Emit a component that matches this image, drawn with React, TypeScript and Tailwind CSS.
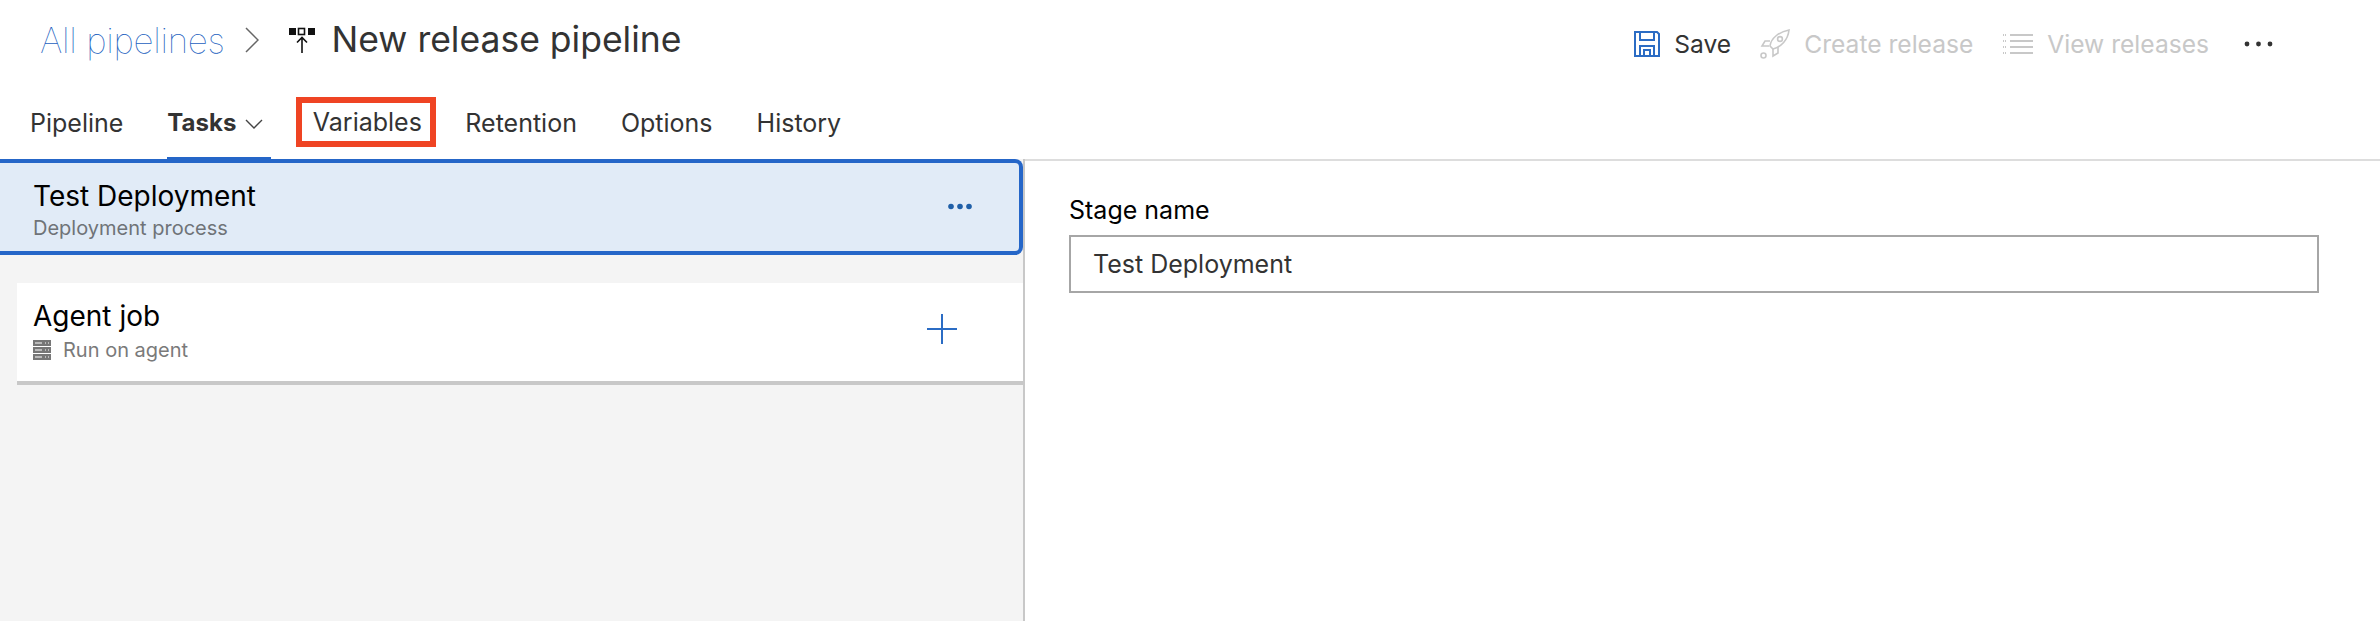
import React from "react";

function Tab({ label, className = "" }: { label: string; className?: string }) {
  return <span className={`text-[25px] leading-[30px] text-[#333333] ${className}`}>{label}</span>;
}

function PipelineIcon() {
  return (
    <svg width="28" height="26" viewBox="0 0 28 26" className="mr-[16px] shrink-0">
      <rect x="1" y="1" width="7" height="7" fill="#111" />
      <rect x="10.5" y="1.5" width="6" height="6" fill="#fff" stroke="#111" strokeWidth="1.6" />
      <rect x="20" y="1" width="7" height="7" fill="#111" />
      <path d="M14 26V11M9 15.5L14 10.5L19 15.5" fill="none" stroke="#111" strokeWidth="1.6" />
    </svg>
  );
}

function SaveIcon() {
  return (
    <svg width="26" height="26" viewBox="0 0 26 26" fill="none" stroke="#2b6cc4" strokeWidth="2">
      <path d="M1 1H23L25 3V25H1Z" />
      <path d="M6 1V9H20V1" />
      <path d="M6 25V15H20V25" />
      <path d="M10 25V19H16V25" />
    </svg>
  );
}

function RocketIcon() {
  return (
    <svg width="30" height="30" viewBox="0 0 30 30" fill="none" stroke="#c8c8c8" strokeWidth="1.6">
      <path d="M10 17C11 9 19 3 29 1C28 11 21 18 13 20Z" />
      <circle cx="20" cy="10" r="2.4" />
      <path d="M10 12H5L2 17L9 17" />
      <path d="M18 18V24L13 27L13 20" />
      <circle cx="3.5" cy="26.5" r="2.5" />
    </svg>
  );
}

function ListIcon() {
  return (
    <svg width="30" height="24" viewBox="0 0 30 24" stroke="#c8c8c8" strokeWidth="2">
      <path d="M7 3H30M7 9H30M7 15H30M7 21H30" />
      <path d="M0 3H3M0 9H3M0 15H3M0 21H3" strokeDasharray="1 1" />
    </svg>
  );
}

function ServerIcon() {
  return (
    <svg width="18" height="20" viewBox="0 0 18 20" className="mr-[12px] shrink-0">
      <rect y="0" width="18" height="6" fill="#777" />
      <rect y="7" width="18" height="6" fill="#777" />
      <rect y="14" width="18" height="6" fill="#777" />
      <path d="M2 3H9M12 3H13M15 3H16M2 10H9M12 10H13M15 10H16M2 17H9M12 17H13M15 17H16" stroke="#fff" strokeWidth="1" />
    </svg>
  );
}

export default function App() {
  return (
    <div className="flex h-[621px] w-[2380px] flex-col overflow-hidden bg-white font-[Inter,sans-serif]">
      <header className="h-[159px] shrink-0">
        <div className="flex h-[97px] items-start">
          <div className="flex h-[80px] items-center pl-[40px]">
            <span className="text-[35px] font-thin leading-none tracking-[-0.3px] text-[#1c5fc0]">All pipelines</span>
            <svg width="14" height="26" viewBox="0 0 14 26" className="ml-[20px] mr-[29px]" fill="none" stroke="#666" strokeWidth="1.5">
              <path d="M1 1L13 13L1 25" />
            </svg>
            <PipelineIcon />
            <span className="text-[35.5px] font-normal leading-none text-[#333333]">New release pipeline</span>
          </div>
          <div className="ml-auto flex h-[88px] items-center pr-[107px] text-[24.6px] leading-[30px]">
            <SaveIcon />
            <span className="ml-[14px] text-[#333333]">Save</span>
            <span className="ml-[29px]"><RocketIcon /></span>
            <span className="ml-[14px] text-[#c8c8c8]">Create release</span>
            <span className="ml-[30px]"><ListIcon /></span>
            <span className="ml-[14px] text-[#c8c8c8]">View releases</span>
            <span className="ml-[35px] text-[#333333]">
              <svg width="29" height="6" viewBox="0 0 29 6" fill="#333"><circle cx="3" cy="3" r="2.4" /><circle cx="14.5" cy="3" r="2.4" /><circle cx="26" cy="3" r="2.4" /></svg>
            </span>
          </div>
        </div>
        <nav className="relative flex h-[62px] items-start pl-[30px]">
          <Tab label="Pipeline" className="mt-[11px]" />
          <div className="relative ml-[44px] flex h-[62px] w-[104px] items-start">
            <span className="mt-[11px] text-[24px] font-bold leading-[30px] text-[#333333]">Tasks</span>
            <svg width="18" height="10" viewBox="0 0 18 10" className="ml-[9px] mt-[22px]" fill="none" stroke="#444" strokeWidth="1.4"><path d="M1 1L9 9L17 1" /></svg>
            <span className="absolute bottom-0 left-0 h-[2px] w-[104px] bg-[#2566c8]" />
          </div>
          <div className="ml-[25px] flex h-[50px] w-[140px] items-center justify-center border-[6px] border-[#ef4423] pl-[2px]">
            <Tab label="Variables" />
          </div>
          <Tab label="Retention" className="ml-[29px] mt-[11px]" />
          <Tab label="Options" className="ml-[44px] mt-[11px]" />
          <Tab label="History" className="ml-[44px] mt-[11px]" />
        </nav>
      </header>
      <main className="flex min-h-0 flex-1">
        <section className="h-full w-[1025px] shrink-0 border-r-[2px] border-[#c8c8c8] bg-[#f4f4f4]">
          <div className="flex h-[96px] items-center justify-between rounded-r-[8px] border-[4px] border-l-0 border-[#2566c8] bg-[#e1ebf7] pl-[33px] pr-[47px]">
            <div className="pt-[3px]">
              <div className="text-[28px] leading-[38px] text-black">Test Deployment</div>
              <div className="text-[20px] leading-[26px] text-[#6f7378]">Deployment process</div>
            </div>
            <svg width="24" height="7" viewBox="0 0 24 7" fill="#1f5fa8" className="-mt-[2px]"><circle cx="3" cy="3.5" r="2.8" /><circle cx="12" cy="3.5" r="2.8" /><circle cx="21" cy="3.5" r="2.8" /></svg>
          </div>
          <div className="ml-[17px] mt-[28px] flex h-[102px] items-center justify-between border-b-[4px] border-[#c8c8c8] bg-white pl-[16px] pr-[66px]">
            <div className="-mt-[4px]">
              <div className="text-[28px] leading-[36px] text-black">Agent job</div>
              <div className="mt-[3px] flex items-center text-[20px] leading-[26px] text-[#7a7a7a]"><ServerIcon />Run on agent</div>
            </div>
            <svg width="30" height="30" viewBox="0 0 30 30" stroke="#2b6cc4" strokeWidth="2" className="-mt-[6px]"><path d="M15 0V30M0 15H30" /></svg>
          </div>
        </section>
        <section className="min-w-0 flex-1 border-t-[2px] border-[#dddddd] pl-[44px] pr-[61px] pt-[34px]">
          <label className="block text-[25px] leading-[30px] text-black">Stage name</label>
          <div className="mt-[10px] flex h-[58px] items-center border-[2px] border-[#a6a6a6] pl-[22px] pt-[2px] text-[25px] text-[#333333]">Test Deployment</div>
        </section>
      </main>
    </div>
  );
}
